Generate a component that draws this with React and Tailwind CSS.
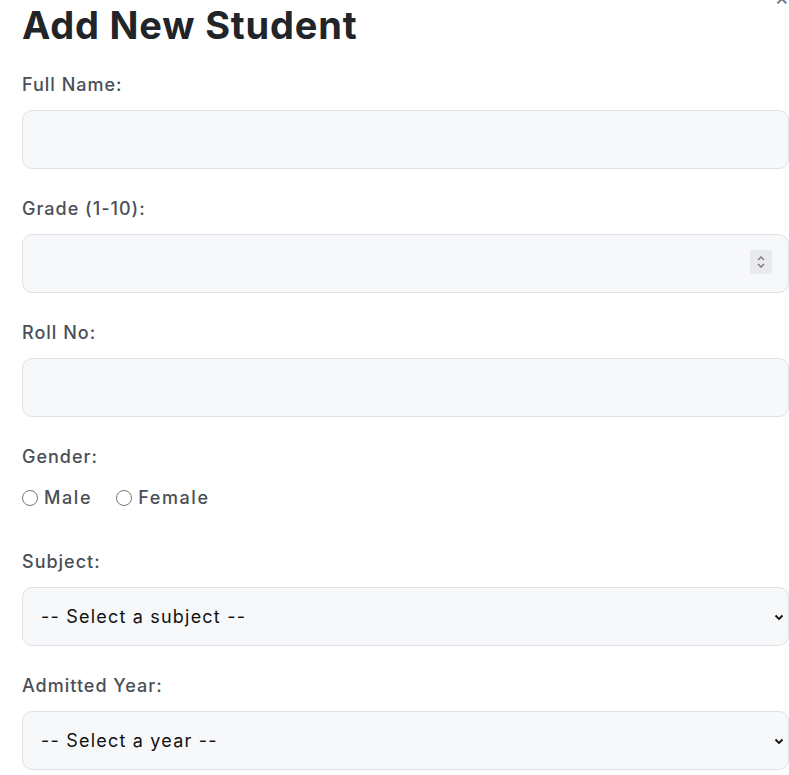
import { useState } from "react";

const font = { fontFamily: "Inter, 'Noto Sans', sans-serif" };

function Label({ children }) {
  return (
    <label className="block text-[18px] font-medium tracking-[1px] text-[#4a4f57] leading-[24px]">
      {children}
    </label>
  );
}

function TextBox() {
  return (
    <input
      type="text"
      className="mt-[13px] block w-full h-[59px] rounded-[10px] border border-[#dfe2e6] bg-[#f7f8fa] px-[18px] text-[18px] outline-none"
    />
  );
}

function Chevron() {
  return (
    <svg
      className="pointer-events-none absolute right-[4px] top-1/2 -translate-y-1/2"
      width="12"
      height="12"
      viewBox="0 0 12 12"
      fill="none"
      stroke="#111"
      strokeWidth="1.8"
    >
      <path d="M2.5 4.5 6 8l3.5-3.5" />
    </svg>
  );
}

function SelectBox({ placeholder, options }) {
  const [value, setValue] = useState("");
  return (
    <div className="relative mt-[13px]">
      <select
        value={value}
        onChange={(e) => setValue(e.target.value)}
        className="block w-full h-[59px] appearance-none rounded-[10px] border border-[#dfe2e6] bg-[#f7f8fa] pl-[18px] pr-8 text-[18px] tracking-[1.2px] text-[#111] outline-none"
      >
        <option value="">{placeholder}</option>
        {options.map((o) => (
          <option key={o} value={o}>
            {o}
          </option>
        ))}
      </select>
      <Chevron />
    </div>
  );
}

export default function App() {
  const [gender, setGender] = useState("");

  return (
    <div className="relative w-[789px] h-[775px] overflow-hidden bg-white pl-[22px]" style={font}>
      {/* close button, mostly scrolled off the top */}
      <span className="absolute right-[0px] top-[-14px] text-[22px] leading-none text-[#6b7280]">
        ×
      </span>

      <h2 className="mt-[2px] text-[38px] font-bold tracking-[0.8px] leading-[46px] text-[#212428]">
        Add New Student
      </h2>

      <div className="mt-[25px]">
        <Label>Full Name:</Label>
        <TextBox />
      </div>

      <div className="mt-[28px]">
        <Label>Grade (1-10):</Label>
        <div className="relative">
          <TextBox />
          <div className="pointer-events-none absolute right-[17px] top-[16px] flex h-[24px] w-[22px] flex-col items-center justify-center rounded-[2px] bg-[#e9eaee]">
            <svg width="10" height="16" viewBox="0 0 10 16" fill="none" stroke="#777" strokeWidth="1.3">
              <path d="M2 6 5 3l3 3" />
              <path d="M2 10l3 3 3-3" />
            </svg>
          </div>
        </div>
      </div>

      <div className="mt-[28px]">
        <Label>Roll No:</Label>
        <TextBox />
      </div>

      <div className="mt-[28px]">
        <Label>Gender:</Label>
        <div className="mt-[15px] flex items-center gap-[24px] text-[18px] tracking-[1.6px] font-medium text-[#4a4f57]">
          <label className="flex items-center gap-[6px]">
            <input
              type="radio"
              name="gender"
              checked={gender === "male"}
              onChange={() => setGender("male")}
              className="h-[16px] w-[16px] m-0"
            />
            Male
          </label>
          <label className="flex items-center gap-[6px]">
            <input
              type="radio"
              name="gender"
              checked={gender === "female"}
              onChange={() => setGender("female")}
              className="h-[16px] w-[16px] m-0"
            />
            Female
          </label>
        </div>
      </div>

      <div className="mt-[39px]">
        <Label>Subject:</Label>
        <SelectBox placeholder="-- Select a subject --" options={["Math", "Science", "English", "Nepali", "Social"]} />
      </div>

      <div className="mt-[28px]">
        <Label>Admitted Year:</Label>
        <SelectBox placeholder="-- Select a year --" options={["2020", "2021", "2022", "2023", "2024"]} />
      </div>
    </div>
  );
}
